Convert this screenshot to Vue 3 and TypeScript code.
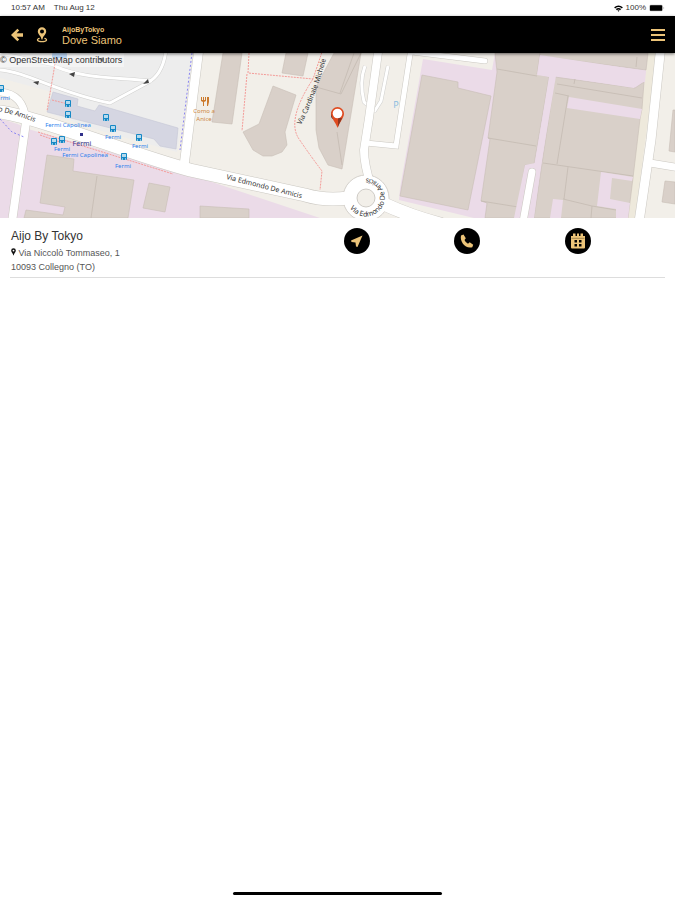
<script setup lang="ts">
interface Building { points: string }
interface Stop { x: number; y: number }
interface Label { x: number; y: number; text: string }

const brand = 'AijoByTokyo'
const pageTitle = 'Dove Siamo'

const buildings: Building[] = [
  { points: '47,155 74,159 73,171 134,180 128,218 24,218 26,210 63,215 65,207 40,203' },
  { points: '149,183 170,187 165,212 143,208' },
  { points: '223,53 242,53 232,124 212,122' },
  { points: '286,53 308,53 303,76 282,73' },
  { points: '273,86 296,95 285,132 287,145 282,152 272,156 263,156 253,150 243,132 259,124' },
  { points: '334,53 361,53 342,169 328,165 319,148 316,130 316,87' },
  { points: '200,206 249,209 249,218 200,218' },
  { points: '422,75 458,82 458,88 491,96 468,210 400,196' },
  { points: '495,53 540,53 537,74 549,77 534,164 525,165 518,208 515,218 485,218 487,203 481,201 490,139 488,138 497,72' },
  { points: '540,53 648,53 646,70 540,56' },
  { points: '555,77 635,88 644,82 642,109 640,119 633,178 628,218 534,218 542,164' },
  { points: '673,110 675,110 675,152 669,151' },
  { points: '665,181 675,182 675,204 662,202' },
]

const buildingLines: string[] = [
  'M97 176 91 218', 'M316 87 341 94 361 53', 'M337 132 342 165',
  'M340 93 354 53', 'M497 69 537 76', 'M488 138 536 146', 'M481 201 518 207',
  'M557 84 642 98', 'M575 79 574 84', 'M568 96 557 164', 'M543 163 633 176',
  'M568 167 564 199', 'M592 206 591 218', 'M637 57 636 67', 'M555 93 569 96',
  'M563 199 592 206', 'M592 206 616 210',
]

const roads: { d: string; w: number }[] = [
  { d: 'M0 112 C45 119 130 154 190 170 L305 195 Q325 201 348 198', w: 13 },
  { d: 'M200 40 184 166', w: 9 },
  { d: 'M26 122 12 222', w: 8 },
  { d: 'M0 92 Q24 94 26 121', w: 7 },
  { d: 'M379 45 369 118 364 150 Q364 164 371 186', w: 8 },
  { d: 'M411 48 396 146 366 143', w: 5 },
  { d: 'M412 52 485 61', w: 5 },
  { d: 'M384 204 Q410 216 440 224', w: 13 },
  { d: 'M532 172 523 222', w: 7 },
  { d: 'M661 45 651 140 639 222', w: 9 },
  { d: 'M650 163 680 168', w: 7 },
]

const parkingLanes: string[] = [
  'M0 70 C28 72 58 93 110 103 L147 83 Q163 75 166 50',
  'M54 66 C85 79 111 77 152 81',
  'M0 53 54 65', 'M365 66Q359 82 364 102L371 108', 'M388 66 381 101 374 112',
]

const footways: string[] = [
  'M57 52 47 111', 'M38 132 173 174', 'M52 100 68 104', 'M40 135 60 142',
  'M249 53 248 73 313 79 322 52', 'M247 74 242 131', 'M313 79Q286 120 299 139T322 171L320 190',
]
const cycleways: string[] = ['M192 53 180 150', 'M0 119 12 132 24 137']

const stops: Stop[] = [
  { x: 68, y: 104 }, { x: 68, y: 115 }, { x: 106, y: 118 }, { x: 113, y: 129 },
  { x: 139, y: 138 }, { x: 62, y: 140 }, { x: 54, y: 142 }, { x: 124, y: 157 }, { x: 1, y: 89 },
]
const stopLabels: Label[] = [
  { x: 68, y: 127, text: 'Fermi Capolinea' }, { x: 113, y: 139, text: 'Fermi' },
  { x: 140, y: 148, text: 'Fermi' }, { x: 62, y: 151, text: 'Fermi' },
  { x: 85, y: 157, text: 'Fermi Capolinea' }, { x: 123, y: 168, text: 'Fermi' },
  { x: 5, y: 100, text: 'rmi' },
]
const arrows: string[] = ['33,82 39,81 38,85', '69,74 75,72 74,77', '98,59 104,57 103,62', '143,84 148,79 149,83']
</script>

<template>
  <div class="screen">
    <div class="status">
      <span>10:57 AM</span>
      <span>Thu Aug 12</span>
      <span class="power">
        <svg class="wifi" viewBox="0 0 10 8" aria-hidden="true">
          <path d="M0 2.6Q5-1.6 10 2.6L8.8 3.9Q5 .9 1.2 3.9ZM1.9 4.6Q5 2.1 8.1 4.6L6.8 5.9Q5 4.4 3.2 5.9ZM3.8 6.4Q5 5.5 6.2 6.4L5 7.8Z" />
        </svg>
        <span>100%</span>
        <svg class="battery" viewBox="0 0 17 8" aria-hidden="true">
          <rect x=".5" y=".5" width="14" height="7" rx="1.5" fill="#bbb" />
          <rect x="1" y="1" width="13" height="6" rx="1" /><path d="M15.4 2.6Q17 4 15.4 5.4Z" fill="#999" />
        </svg>
      </span>
    </div>

    <header class="bar">
      <button class="tool" type="button" aria-label="Indietro">
        <svg class="back" viewBox="0 0 14 14" aria-hidden="true"><path d="M7.400 .8 9.200 2.500 6.600 5.300H13V8.700H6.600L9.200 11.500 7.400 13.200 1 7Z" /></svg>
      </button>
      <svg class="place" viewBox="0 0 12 16" aria-hidden="true">
        <path fill-rule="evenodd" d="M6 .3a4.2 4.2 0 0 1 4.2 4.2C10.2 7.4 6.6 9.4 6.5 12.5H5.5C5.4 9.4 1.8 7.4 1.8 4.5A4.2 4.2 0 0 1 6 .3ZM6 2.6a2 2 0 1 0 0 4 2 2 0 0 0 0-4Z" />
        <path d="M3.6 11.4C.4 12 .4 14.7 6 14.7S11.6 12 8.4 11.4" fill="none" stroke="#ecc479" stroke-width="1.2" />
      </svg>
      <div class="titles">
        <span class="brand">{{ brand }}</span>
        <h1>{{ pageTitle }}</h1>
      </div>
      <button class="tool menu" type="button" aria-label="Menu">
        <svg class="lines" viewBox="0 0 14 12" aria-hidden="true"><path d="M0 0H14V2H0ZM0 5H14V7H0ZM0 10H14V12H0Z" /></svg>
      </button>
    </header>

    <main>
      <div class="map">
        <svg viewBox="0 53 675 165" preserveAspectRatio="xMidYMid slice" role="img" aria-label="Mappa">
          <defs>
            <path id="amicis-west" d="M-2 111Q15 114 42 125" />
            <path id="amicis-main" d="M226 179 308 200" />
            <path id="cardinale" d="M301 125Q320 88 329 46" />
            <path id="ring" d="M350 208A19 19 0 1 0 350 187" />
          </defs>
          <rect y="53" width="675" height="165" fill="#f2efe9" />
          <path fill="#ededed" d="M0 53H195L177 152 98 130 48 113 52 92 0 78Z" />
          <path fill="#ebdbe8" d="M0 119Q18 123 28 129L188 174 320 218H0Z" />
          <path fill="#ebdbe8" d="M423 59 492 70 495 53H648L645 82 643 119 634 180 628 218H474L399 200 400 188Z" />
          <path fill="#d5d6e2" stroke="#c5c6d5" stroke-width=".6" d="M53 92 78 99 77 106 95 111 99 105 178 128 176 149 160 146 154 139 47 112Z" />
          <path fill="#eee9dc" d="M648 53H657L635 218H627Z" />

          <polygon v-for="b in buildings" :key="b.points" :points="b.points" fill="#d9d0c9" stroke="#c8bdb5" stroke-width=".6" />
          <path v-for="d in buildingLines" :key="d" :d="d" class="wall" />
          <path fill="#ebdbe8" d="M540 55 646 71 645 82 635 83 634 88 556 76 541 165 534 218H514L525 165 535 163 549 77 537 75ZM569 97 642 109 640 119 567 108ZM601 172 633 177 632 181 612 178 610 199 630 203 628 218H616V209L597 206ZM553 199 563 200 561 218H550Z" />

          <path v-for="d in parkingLanes" :key="d" :d="d" class="lane-edge" />
          <path v-for="d in parkingLanes" :key="d + 'f'" :d="d" class="lane" />
          <path v-for="r in roads" :key="r.d" :d="r.d" class="road-edge" :stroke-width="r.w + 1" />
          <circle cx="366" cy="198" r="23" fill="#fff" stroke="#cbc8c2" stroke-width=".8" />
          <path v-for="r in roads" :key="r.d + 'f'" :d="r.d" class="road" :stroke-width="r.w" />
          <circle cx="366" cy="198" r="9" fill="#f2efe9" stroke="#c4c0ba" stroke-width=".8" />

          <path v-for="d in footways" :key="d" :d="d" class="foot" />
          <path v-for="d in cycleways" :key="d" :d="d" class="cycle" />
          <polygon v-for="a in arrows" :key="a" :points="a" fill="#444" />

          <rect x="52" y="53" width="15" height="5" rx="1" fill="#8db9ec" />
          <g v-for="s in stops" :key="`${s.x}-${s.y}`">
            <rect :x="s.x - 3" :y="s.y - 4" width="6" height="7" rx="1" fill="#1688c5" />
            <rect :x="s.x - 2" :y="s.y - 3" width="4" height="3" fill="#b5daee" />
            <path :d="`M${s.x - 2} ${s.y + 2}h1M${s.x + 1} ${s.y + 2}h1`" stroke="#fff" />
          </g>
          <text v-for="l in stopLabels" :key="`${l.x}-${l.y}`" :x="l.x" :y="l.y" class="stop">{{ l.text }}</text>
          <rect x="80" y="133" width="3" height="3" fill="#30308a" />
          <text x="82" y="146" class="station">Fermi</text>

          <path fill="#cc7a2c" d="M201 97h1v3h1v-3h1v3h1v-3h1v4l-2 1v4h-1v-4l-2-1ZM207 97h2v5l-1 4h-1Z" />
          <text x="204" y="113" class="food">Como a</text>
          <text x="204" y="121" class="food">Anice</text>
          <text x="396" y="108" class="parking">P</text>

          <text class="street"><textPath href="#amicis-west">o De Amicis</textPath></text>
          <text class="street"><textPath href="#amicis-main">Via Edmondo De Amicis</textPath></text>
          <text class="street"><textPath href="#cardinale">Via Cardinale Michele</textPath></text>
          <text class="street"><textPath href="#ring">Via Edmondo De Amicis</textPath></text>

          <ellipse cx="334" cy="115" rx="3" ry="4" fill="#222" />
          <path fill="#df4b20" d="M337.5 107A6.5 6.5 0 0 1 344 113.500C344 118 339.500 122 337.500 128 335.500 122 331 118 331 113.500A6.500 6.500 0 0 1 337.500 107Z" />
          <path fill="#8d3520" d="M338 118 342 118 338 127Z" />
          <circle cx="337.500" cy="113.500" r="4.800" fill="#fff" />
        </svg>
        <a class="credit" href="#">©&nbsp;OpenStreetMap contributors</a>
      </div>

      <section class="venue">
        <div class="details">
          <h2>Aijo By Tokyo</h2>
          <address>
            <svg class="pin" viewBox="0 0 6 9" aria-hidden="true"><path fill-rule="evenodd" d="M3 0a2.800 2.800 0 0 1 2.800 2.800C5.800 5 3.800 6 3 9 2.200 6 .2 5 .2 2.800A2.800 2.800 0 0 1 3 0ZM3 1.700a1.100 1.100 0 1 0 0 2.200 1.100 1.100 0 0 0 0-2.200Z" /></svg>
            Via Niccolò Tommaseo, 1<br>10093 Collegno (TO)
          </address>
        </div>
        <div class="actions">
          <a class="round" href="#" aria-label="Naviga">
            <svg viewBox="0 0 26 26" aria-hidden="true"><path d="M18.500 7.500 13.500 19 12 18.500 11.500 14.500 7.500 14 7 12.500Z" /></svg>
          </a>
          <a class="round" href="#" aria-label="Chiama">
            <svg viewBox="0 0 26 26" aria-hidden="true"><path d="M7 7.500 9.500 6.500 11.800 10.300 10.500 12Q11.500 14.600 14 15.700L15.700 14.300 19.200 16.800 18.300 19.200C12 21.500 5.500 14 7 7.500Z" /></svg>
          </a>
          <button class="round" type="button" aria-label="Prenota">
            <svg viewBox="0 0 26 26" aria-hidden="true">
              <path fill-rule="evenodd" d="M6 8H8V5.500H10.500V8H12V5.500H14V8H15.500V5.500H18V8H20V19.500Q20 20.500 19 20.500H7Q6 20.500 6 19.500ZM9.500 12V14.500H12V12ZM14 12V14.500H16.500V12ZM9.500 16V18.500H12V16ZM14 16V18.500H16.500V16Z" />
              <path d="M6.500 10.300H19.500" stroke="#705d38" stroke-width=".6" />
            </svg>
          </button>
        </div>
      </section>
    </main>
    <div class="home"></div>
  </div>
</template>

<style>
body { margin: 0; background: #fff; }
</style>

<style scoped>
.screen { min-height: 100vh; display: flex; flex-direction: column; font-family: "Liberation Sans", Arial, sans-serif; color: #333; }
svg { display: block; flex: none; }
.status { height: 16px; padding: 0 10px 0 11px; display: flex; align-items: center; gap: 9px; font-size: 8px; line-height: 10px; }
.power { margin-left: auto; display: flex; align-items: center; gap: 3px; }
.wifi { width: 9px; height: 7px; }
.battery { width: 16px; height: 8px; }
.bar { height: 37px; box-sizing: border-box; padding: 0 10px; display: flex; align-items: center; background: #000; color: #ecc479; position: relative; z-index: 1; box-shadow: 0 1px 3px #0008; }
.bar svg { fill: currentColor; }
.tool { padding: 0; border: 0; background: none; color: inherit; }
.back { width: 14px; height: 14px; }
.place { width: 12px; height: 16px; margin: 0 14px 0 12px; }
.titles { display: flex; flex-direction: column; padding-top: 4px; }
.brand { font-size: 7px; line-height: 8px; font-weight: bold; }
h1 { margin: 0; font-size: 11px; line-height: 13px; font-weight: normal; }
.menu { margin-left: auto; }
.lines { width: 14px; height: 12px; }
.map { position: relative; overflow: hidden; }
.map svg { width: 100%; height: auto; }
.credit { position: absolute; top: 0; left: 0; padding-right: 2px; font-size: 9px; line-height: 14px; color: #333; text-decoration: none; background: #ffffff66; }
.wall { fill: none; stroke: #c2b7af; stroke-width: 0.7; }
.lane-edge { fill: none; stroke: #d0d0cf; stroke-width: 4; }
.lane { fill: none; stroke: #fff; stroke-width: 3; }
.road-edge { fill: none; stroke: #cbc8c2; stroke-linecap: round; }
.road { fill: none; stroke: #fff; stroke-linecap: round; }
.foot { fill: none; stroke: #f49b98; stroke-width: 1; stroke-dasharray: 2 1; }
.cycle { fill: none; stroke: #8984f2; stroke-width: 1; stroke-dasharray: 2 2; }
.map text { font-family: "Noto Sans", sans-serif; font-size: 7px; }
.map .stop { font-size: 6px; fill: #2c80ed; text-anchor: middle; }
.map .station { fill: #3b3b91; text-anchor: middle; }
.map .food { font-size: 6px; fill: #cd8743; text-anchor: middle; }
.map .parking { font-size: 9px; fill: #8bbce0; text-anchor: middle; }
.street { fill: #333; }
.venue { margin: 0 10px; padding: 10px 0 3px; display: grid; grid-template-columns: 1fr 1fr; border-bottom: 1px solid #ddd; }
.details { padding-left: 1px; }
h2 { margin: 0 0 1px; font-size: 12px; line-height: 17px; font-weight: normal; }
address { font-size: 9px; line-height: 14px; font-style: normal; color: #555; }
.pin { display: inline-block; width: 5px; height: 8px; fill: #111; }
.actions { display: flex; justify-content: space-between; align-items: flex-start; padding: 0 74px 0 6px; }
.round { display: block; width: 26px; height: 26px; padding: 0; border: 0; border-radius: 50%; background: #000; }
.round svg { width: 26px; height: 26px; fill: #ecc479; }
.home { width: 31%; height: 3px; margin: auto auto 5px; border-radius: 2px; background: #000; }
</style>
